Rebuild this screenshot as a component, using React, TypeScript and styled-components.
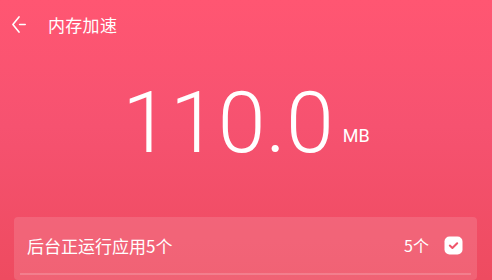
import React from 'react'
import styled, { createGlobalStyle } from 'styled-components'

const GlobalStyle = createGlobalStyle`
  html, body {
    margin: 0;
    padding: 0;
  }
  body {
    font-family: Roboto, "Noto Sans CJK SC", sans-serif;
    overflow: hidden;
  }
`

const Page = styled.div`
  width: 492px;
  height: 280px;
  overflow: hidden;
  background: linear-gradient(180deg, #ff5672 0%, #f65270 45%, #ee4b60 100%);
  color: #fff;
  display: flex;
  flex-direction: column;
`

const Header = styled.div`
  height: 48px;
  display: flex;
  align-items: center;
  padding-left: 12px;
`

const BackButton = styled.div`
  width: 14px;
  height: 17px;
  display: flex;
  margin-right: 22px;
`

const Title = styled.span`
  font-size: 17px;
  font-family: "Noto Sans CJK SC", sans-serif;
  letter-spacing: 0.3px;
`

const Hero = styled.div`
  display: flex;
  justify-content: center;
  align-items: flex-end;
  margin-top: 16px;
  height: 102px;
`

const Amount = styled.span`
  font-family: Roboto, sans-serif;
  font-weight: 300;
  font-size: 86px;
  line-height: 1;
`

const Unit = styled.span`
  font-family: Roboto, sans-serif;
  font-size: 18px;
  font-weight: 400;
  margin-left: 9px;
  margin-bottom: 20px;
`

const Card = styled.div`
  margin: 51px 15px 0 14px;
  background: rgba(255, 255, 255, 0.13);
  border-radius: 4px;
  flex: 1;
  padding: 0 6px;
`

const Row = styled.div`
  height: 56px;
  display: flex;
  align-items: center;
  padding: 0 8px 0 7px;
  border-bottom: 2px solid rgba(255, 255, 255, 0.18);
`

const RowLabel = styled.span`
  flex: 1;
  font-size: 17px;
  font-family: "Noto Sans CJK SC", sans-serif;
`

const RowCount = styled.span`
  font-size: 16px;
  font-family: "Noto Sans CJK SC", sans-serif;
  margin-right: 15px;
`

const Check = () => (
  <svg width="19" height="19" viewBox="0 0 19 19">
    <rect x="0.5" y="0.5" width="18" height="18" rx="5" fill="#fff" />
    <path
      d="M5.8 9.6 L8.4 12 L13.2 7.2"
      fill="none"
      stroke="#f0566b"
      strokeWidth="2"
      strokeLinecap="round"
      strokeLinejoin="round"
    />
  </svg>
)

const App: React.FC = () => {
  return (
    <Page>
      <GlobalStyle />
      <Header>
        <BackButton>
          <svg width="14" height="17" viewBox="0 0 14 17">
            <path
              d="M7 0.9 L0.9 8.5 L7 16.1 M7.6 8.5 H13.2"
              fill="none"
              stroke="#fff"
              strokeWidth="1.6"
              strokeLinecap="round"
              strokeLinejoin="round"
            />
          </svg>
        </BackButton>
        <Title>内存加速</Title>
      </Header>
      <Hero>
        <Amount>110.0</Amount>
        <Unit>MB</Unit>
      </Hero>
      <Card>
        <Row>
          <RowLabel>后台正运行应用5个</RowLabel>
          <RowCount>5个</RowCount>
          <Check />
        </Row>
      </Card>
    </Page>
  )
}

export default App
